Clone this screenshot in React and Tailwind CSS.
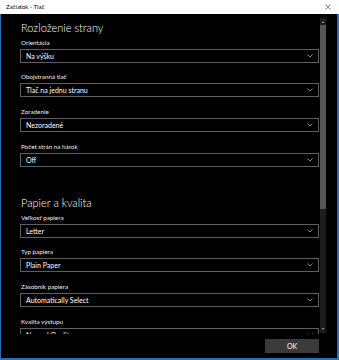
import React from "react";

const font = { fontFamily: "Lato, 'Noto Sans', sans-serif" };

function Chevron() {
  return (
    <svg width="6" height="4" viewBox="0 0 6 4" className="shrink-0">
      <path d="M0.5 0.5 L3 3 L5.5 0.5" fill="none" stroke="#a8a8a8" strokeWidth="0.8" />
    </svg>
  );
}

function Field({ label, value, gap }) {
  return (
    <div className={gap}>
      <div className="h-[9px] leading-[9px] text-[6.3px] text-[#ececec] pl-[1px]">{label}</div>
      <div className="mt-[2px] h-[14px] border border-[#5e5e5e] flex items-center justify-between pl-[5px] pr-[5px]">
        <span className="text-[7px] text-white leading-none">{value}</span>
        <Chevron />
      </div>
    </div>
  );
}

export default function App() {
  return (
    <div className="w-[339px] h-[360px] bg-black flex flex-col" style={font}>
      <div className="h-[14px] bg-white flex items-center justify-between pl-[6px] pr-[8px] shrink-0">
        <span className="text-[6px] text-black leading-none">Začiatok - Tlač</span>
        <svg width="6" height="6" viewBox="0 0 6 6">
          <path d="M0.5 0.5 L5.5 5.5 M5.5 0.5 L0.5 5.5" stroke="#555" strokeWidth="0.7" />
        </svg>
      </div>
      <div className="flex-1 flex flex-col border-l border-r-2 border-b-2 border-[#2a6fb8]">
        <div className="h-[320px] flex overflow-hidden">
          <div className="w-[318px] pl-[19px] overflow-hidden">
            <div className="mt-[7px] h-[14px] leading-[14px] text-[11px] font-light text-white pl-[1px]">
              Rozloženie strany
            </div>
            <Field gap="mt-[3px]" label="Orientácia" value="Na výšku" />
            <Field gap="mt-[9px]" label="Obojstranná tlač" value="Tlač na jednu stranu" />
            <Field gap="mt-[10px]" label="Zoradenie" value="Nezoradené" />
            <Field gap="mt-[10px]" label="Počet strán na hárok" value="Off" />
            <div className="mt-[29px] h-[14px] leading-[14px] text-[11px] font-light text-white pl-[1px]">
              Papier a kvalita
            </div>
            <Field gap="mt-[3px]" label="Veľkosť papiera" value="Letter" />
            <Field gap="mt-[9px]" label="Typ papiera" value="Plain Paper" />
            <Field gap="mt-[10px]" label="Zásobník papiera" value="Automatically Select" />
            <Field gap="mt-[10px]" label="Kvalita výstupu" value="Normal Quality" />
          </div>
          <div className="ml-[1px] mt-[4px] w-[6px] h-[315px] bg-[#1c1c1c] flex flex-col items-center">
            <svg width="4" height="4" viewBox="0 0 4 4" className="mt-[2px]">
              <path d="M0.5 3 L2 1 L3.5 3 Z" fill="#8a8a8a" />
            </svg>
            <div className="mt-[1px] w-[6px] h-[184px] bg-[#565656]" />
            <div className="flex-1" />
            <svg width="4" height="4" viewBox="0 0 4 4" className="mb-[2px]">
              <path d="M0.5 1 L2 3 L3.5 1 Z" fill="#8a8a8a" />
            </svg>
          </div>
        </div>
        <div className="flex-1 flex justify-end items-start pr-[18px] pt-[5px]">
          <div className="w-[54px] h-[14px] bg-[#3a3a3a] flex items-center justify-center text-[7px] text-white leading-none">
            OK
          </div>
        </div>
      </div>
    </div>
  );
}
